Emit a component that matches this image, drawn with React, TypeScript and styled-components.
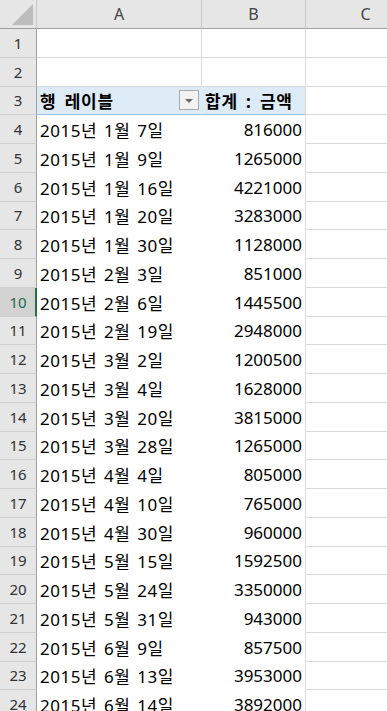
import React from 'react';
import styled, { createGlobalStyle } from 'styled-components';

const GlobalStyle = createGlobalStyle`
  html, body {
    margin: 0;
    padding: 0;
    background: #ffffff;
    overflow: hidden;
  }
  body {
    font-family: "Noto Sans", "Noto Sans CJK KR", sans-serif;
  }
`;

const ROW_H = 28.75;

const Sheet = styled.div`
  display: grid;
  grid-template-columns: 37px 165px 104px 120px;
  grid-auto-rows: ${ROW_H}px;
  grid-template-rows: 29px;
  width: 387px;
  height: 711px;
  overflow: hidden;
  color: #000;
`;

const HeadCell = styled.div<{ $last?: boolean }>`
  background: #e6e6e6;
  border-bottom: 1px solid #9e9e9e;
  border-right: 1px solid ${(p) => (p.$last ? '#e6e6e6' : '#c8c8c8')};
  display: flex;
  align-items: center;
  justify-content: center;
  font-size: 16px;
  color: #444;
  box-sizing: border-box;
`;

const Corner = styled.div`
  background: #e6e6e6;
  border-bottom: 1px solid #9e9e9e;
  border-right: 1px solid #c8c8c8;
  box-sizing: border-box;
  display: flex;
  align-items: flex-end;
  justify-content: flex-end;
  padding: 0 3px 3px 0;
`;

const CornerMark = styled.div`
  width: 0;
  height: 0;
  border-left: 21px solid transparent;
  border-bottom: 21px solid #bcbcbc;
`;

const RowHead = styled.div<{ $active?: boolean }>`
  background: ${(p) => (p.$active ? '#d2d2d2' : '#e6e6e6')};
  border-bottom: 1px solid #cfcfcf;
  border-right: ${(p) => (p.$active ? '2px solid #217346' : '1px solid #9e9e9e')};
  box-sizing: border-box;
  display: flex;
  align-items: center;
  justify-content: center;
  padding-left: ${(p) => (p.$active ? '1px' : '0')};
  font-size: 15px;
  color: ${(p) => (p.$active ? '#1e6b48' : '#333')};
`;

const Cell = styled.div<{ $grid?: boolean; $right?: boolean; $edge?: boolean; $wide?: boolean }>`
  box-sizing: border-box;
  border-bottom: 1px solid ${(p) => (p.$grid ? '#d9d9d9' : 'transparent')};
  border-right: 1px solid ${(p) => (p.$grid || p.$edge ? '#d9d9d9' : 'transparent')};
  display: flex;
  align-items: center;
  justify-content: ${(p) => (p.$right ? 'flex-end' : 'flex-start')};
  padding: 1px 3px 0 3px;
  font-size: 17px;
  word-spacing: 2px;
  letter-spacing: ${(p) => (p.$wide ? '0.5px' : '0')};
  white-space: nowrap;
  overflow: hidden;
  background: #fff;
`;

const PivotHead = styled.div<{ $edge?: boolean }>`
  box-sizing: border-box;
  background: #ddebf7;
  border-bottom: 1px solid #9bc2e6;
  border-right: 1px solid ${(p) => (p.$edge ? '#d9d9d9' : '#ddebf7')};
  display: flex;
  align-items: center;
  justify-content: space-between;
  padding: 1px 2px 0 3px;
  font-size: 17px;
  font-weight: 700;
  letter-spacing: 0.8px;
  word-spacing: 3px;
  white-space: nowrap;
`;

const FilterButton = styled.div`
  width: 20px;
  height: 20px;
  box-sizing: border-box;
  border: 1px solid #a9a9a9;
  background: #f3f3f3;
  display: flex;
  align-items: center;
  justify-content: center;
  margin-top: -1px;
`;

const Arrow = styled.div`
  width: 0;
  height: 0;
  border-left: 4px solid transparent;
  border-right: 4px solid transparent;
  border-top: 4px solid #6b6b6b;
  margin-top: 2px;
`;

const rows: [string, string][] = [
  ['2015년 1월 7일', '816000'],
  ['2015년 1월 9일', '1265000'],
  ['2015년 1월 16일', '4221000'],
  ['2015년 1월 20일', '3283000'],
  ['2015년 1월 30일', '1128000'],
  ['2015년 2월 3일', '851000'],
  ['2015년 2월 6일', '1445500'],
  ['2015년 2월 19일', '2948000'],
  ['2015년 3월 2일', '1200500'],
  ['2015년 3월 4일', '1628000'],
  ['2015년 3월 20일', '3815000'],
  ['2015년 3월 28일', '1265000'],
  ['2015년 4월 4일', '805000'],
  ['2015년 4월 10일', '765000'],
  ['2015년 4월 30일', '960000'],
  ['2015년 5월 15일', '1592500'],
  ['2015년 5월 24일', '3350000'],
  ['2015년 5월 31일', '943000'],
  ['2015년 6월 9일', '857500'],
  ['2015년 6월 13일', '3953000'],
  ['2015년 6월 14일', '3892000'],
];

export default function App() {
  return (
    <>
      <GlobalStyle />
      <Sheet>
        <Corner>
          <CornerMark />
        </Corner>
        <HeadCell>A</HeadCell>
        <HeadCell>B</HeadCell>
        <HeadCell $last>C</HeadCell>

        {[1, 2].map((n) => (
          <React.Fragment key={n}>
            <RowHead>{n}</RowHead>
            <Cell $grid />
            <Cell $grid />
            <Cell $grid />
          </React.Fragment>
        ))}

        <RowHead>3</RowHead>
        <PivotHead>
          <span>행 레이블</span>
          <FilterButton>
            <Arrow />
          </FilterButton>
        </PivotHead>
        <PivotHead $edge>
          <span>합계 : 금액</span>
        </PivotHead>
        <Cell $grid />

        {rows.map(([date, amount], i) => {
          const n = i + 4;
          return (
            <React.Fragment key={n}>
              <RowHead $active={n === 10}>{n}</RowHead>
              <Cell $wide>{date}</Cell>
              <Cell $right $edge>
                {amount}
              </Cell>
              <Cell $grid />
            </React.Fragment>
          );
        })}
      </Sheet>
    </>
  );
}
